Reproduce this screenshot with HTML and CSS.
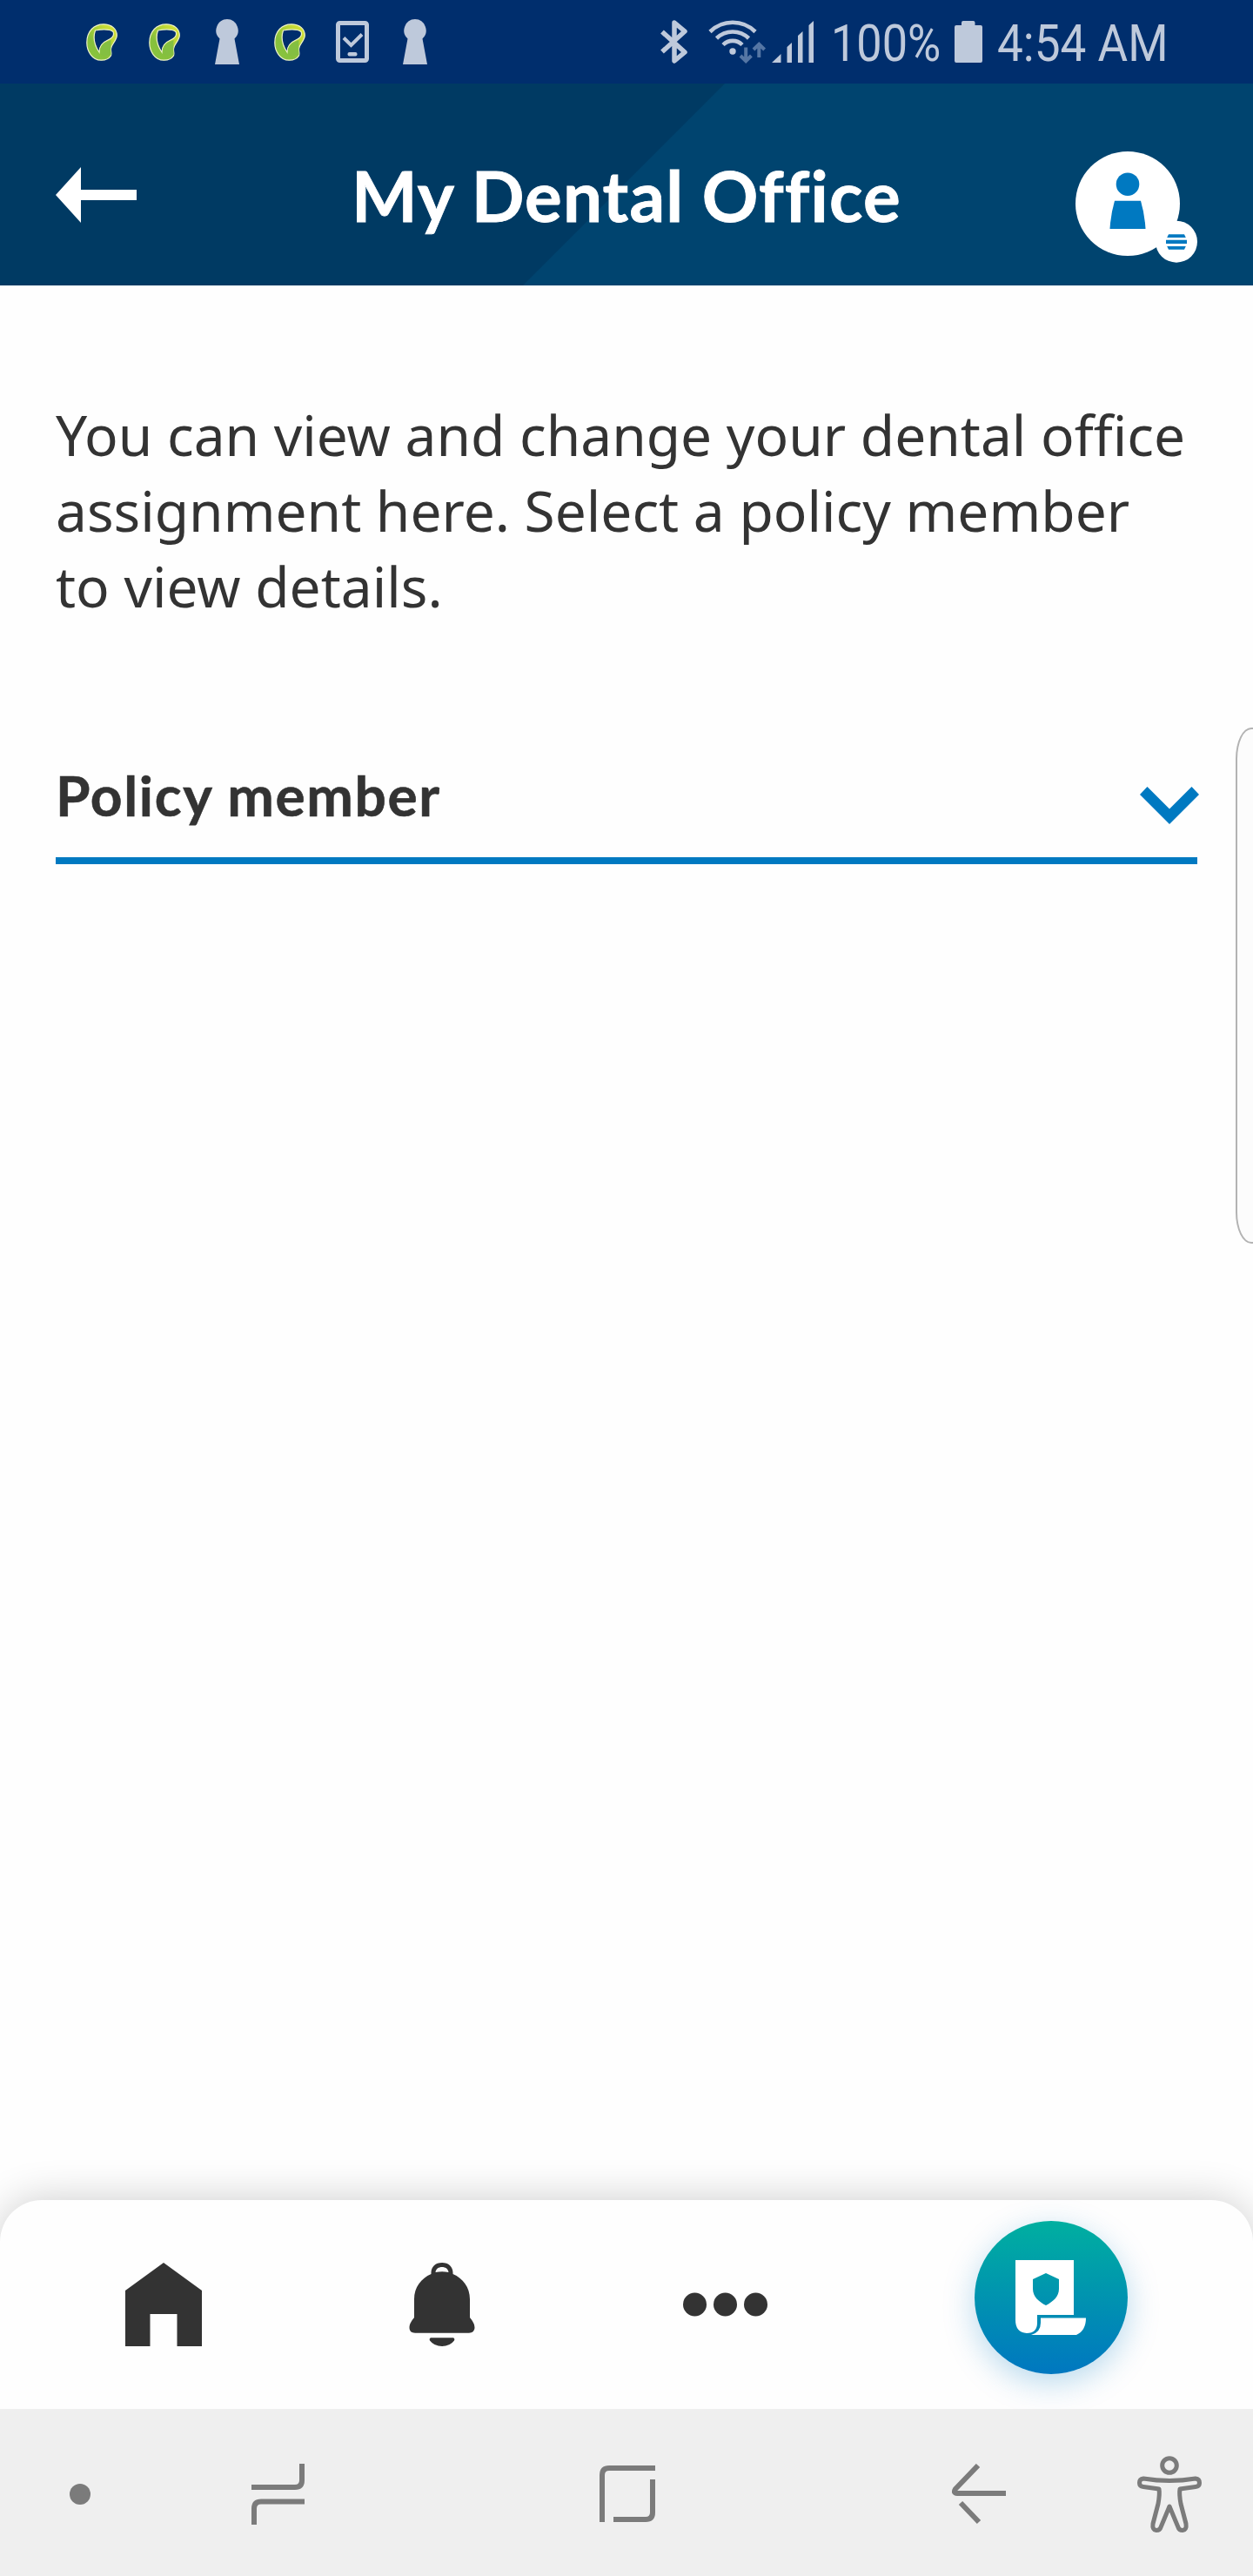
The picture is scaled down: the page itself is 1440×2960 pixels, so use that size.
FILE: index.html
```html
<!DOCTYPE html>
<html lang="en">
<head>
<meta charset="utf-8">
<title>My Dental Office</title>
<link rel="stylesheet" href="styles.css">
</head>
<body>
<svg width="0" height="0" class="defs" aria-hidden="true">
  <defs>
    <linearGradient id="leaf" x1="0" y1="1" x2="1" y2="0"><stop offset="0" stop-color="#8cc63f"/><stop offset=".35" stop-color="#86c03c"/><stop offset=".75" stop-color="#c4d937"/><stop offset="1" stop-color="#dfe63a"/></linearGradient>
    <symbol id="loop" viewBox="0 0 36 43">
      <path fill="url(#leaf)" stroke="#eef3c8" stroke-width="1.2" fill-rule="evenodd" d="M20 .8C29 .8 35.3 6 35.3 13.500C35.300 20 29 23 28.500 29C28.300 33 29.500 34 28.500 37C26 41 21 42.300 17 42.200C7 42 .8 32 .8 22C.8 9 9 .8 20 .8ZM10.500 8C8 15 9 24 15 33C15 26 18 22 25 19C30.500 16.500 32.500 13 31 9.500C27 6.500 19 6.500 10.500 8Z"/>
      <path fill="#84bf41" d="M16 34C16 26 19 23 25 20.500L28.500 19C28 24 28.500 30 28.500 36C24 38 19 38 16 34Z"/>
    </symbol>
    <symbol id="keyhole" viewBox="0 0 28 52"><path d="M14 0a13 13 0 0 1 8.500 22.500L28 52H0L5.500 22.500A13 13 0 0 1 14 0Z"/></symbol>
  </defs>
</svg>
<div class="screen">
  <div class="status">
    <div class="notices">
      <svg class="loop" viewBox="0 0 36 43"><use href="#loop"/></svg>
      <svg class="loop" viewBox="0 0 36 43"><use href="#loop"/></svg>
      <svg class="keyhole" viewBox="0 0 28 52"><use href="#keyhole"/></svg>
      <svg class="loop" viewBox="0 0 36 43"><use href="#loop"/></svg>
      <svg class="tablet" viewBox="0 0 38 48"><rect x="2.500" y="2.500" width="33" height="43" rx="2" fill="none" stroke="currentColor" stroke-width="5"/><path d="M9 19.500L17.500 28L30 15.500" fill="none" stroke="currentColor" stroke-width="4"/><rect x="13.500" y="36" width="11" height="4.500" rx="2"/></svg>
      <svg class="keyhole" viewBox="0 0 28 52"><use href="#keyhole"/></svg>
    </div>
    <div class="system">
      <svg class="bt" viewBox="0 0 32 50"><path d="M2 13.500L28 37L16 47V3L28 13L2 36.500" fill="none" stroke="currentColor" stroke-width="5.500" stroke-linejoin="round"/></svg>
      <svg class="wifi" viewBox="0 0 66 50"><g fill="none" stroke="currentColor" stroke-width="4.600"><path d="M2 13.500a37 37 0 0 1 52 0M9.500 21a26.500 26.500 0 0 1 37 0M17 28.500a15.500 15.500 0 0 1 22 0"/></g><circle cx="28" cy="36" r="3.700"/><g fill="none" stroke="#5576a4" stroke-width="4"><path d="M43.200 31.500v14M37 41l6.200 6.200L49.400 41M58.300 43V29M52 34l6.300-6.200L64.600 34"/></g></svg>
      <svg class="signal" viewBox="0 0 48 48"><path d="M0 48L10.500 38V48ZM17.500 30L23 25V48H17.500ZM30 17L35.500 12V48H30ZM42.500 5L48 0V48H42.500Z"/></svg>
      <span class="percent"><span class="narrow">100%</span></span>
      <svg class="battery" viewBox="0 0 32 48"><path d="M10 0H21.500Q23.500 0 23.500 2V5H30Q32 5 32 7V46Q32 48 30 48H2Q0 48 0 46V7Q0 5 2 5H8V2Q8 0 10 0Z"/></svg>
      <span class="clock"><span class="narrow">4:54 AM</span></span>
    </div>
  </div>

  <header class="header">
    <svg class="back" viewBox="0 0 93 64"><path d="M0 32L29 0V26H93V38H29V64Z"/></svg>
    <h1>My Dental Office</h1>
    <svg class="profile" viewBox="0 0 140 128"><g fill="#fff"><circle cx="60" cy="60" r="60"/><circle cx="116" cy="103.700" r="24"/></g><g fill="#0079c1"><circle cx="60" cy="37.700" r="13.300"/><path d="M45 56.700H75Q79.500 72 80.500 89H39.500Q40.500 72 45 56.700Z"/><path d="M107 95.300H125L126.800 99H105.200ZM104 101.800H128V106H104ZM105.200 109H126.800L125 112.700H107Z"/></g></svg>
  </header>

  <main class="content">
    <p>You can view and change your dental office assignment here. Select a policy member to view details.</p>
    <div class="select">
      <span>Policy member</span>
      <svg viewBox="0 0 68 43"><path d="M8.500 0L34 25.500L59.500 0L68 9L34 43L0 9Z"/></svg>
    </div>
    <div class="edge-handle"></div>
  </main>

  <nav class="tabs">
    <svg class="home" viewBox="0 0 88 96"><path d="M44 0L88 32V96H59.500V59H28.500V96H0V32Z"/></svg>
    <svg class="bell" viewBox="0 0 76 96"><path fill-rule="evenodd" d="M25.500 13C25 5 30 0 38 0S51 5 50.500 13C62 18 70 28 70 42V63C73 67 75.500 70 75.500 75Q75 80.700 69 80.700H7Q.5 80.700.5 75C.5 70 3 67 6 63V42C6 28 14 18 25.500 13ZM30.500 11Q38 9.600 45.500 11C45 7 42 5 38 5S31 7 30.500 11ZM25 86.300H51Q53 87 52 89.500Q47 96 38 96T24 89.500Q23 87 25 86.300Z"/></svg>
    <svg class="more" viewBox="0 0 97 28"><circle cx="13.500" cy="14" r="13.500"/><circle cx="48.500" cy="14" r="13.500"/><circle cx="83.500" cy="14" r="13.500"/></svg>
    <div class="fab"><svg viewBox="0 0 81 86"><path fill-rule="evenodd" d="M0 0H67V63H25V72Q25 84 13 84Q0 83 0 69ZM35 15L20 22V33C20 42 27 48 35 52C43 48 50 42 50 33V22Z"/><path d="M29 66.500H81Q81 81 70 86H18Q29 83 29 72Z"/></svg></div>
  </nav>

  <div class="sysnav">
    <svg class="dot" viewBox="0 0 24 24"><circle cx="12" cy="12" r="12"/></svg>
    <svg class="recents" viewBox="0 0 62 70"><path d="M0 27H50Q58 27 58 19V0M61 43.500H11Q3 43.500 3 51.500V70"/></svg>
    <svg class="window" viewBox="0 0 64 65"><path d="M3 65V11Q3 3 11 3H64M61 16V54Q61 62 53 62H16"/></svg>
    <svg class="prev" viewBox="0 0 62 70"><path d="M30 2L4 29Q1 34 6 34H62M10 45L31 67"/></svg>
    <svg class="a11y" viewBox="0 0 74 88"><circle cx="37" cy="11" r="8.300"/><path d="M7 26Q37 31 67 26Q71.500 26.500 71.500 31Q71.500 35 67 35.500L49 38Q48 44 50 55L56 78Q57 85 52 85.500Q48 85.500 47 82L37 58L27 82Q26 85.500 22 85.500Q17 85 18 78L24 55Q26 44 25 38L7 35.500Q2.500 35 2.500 31Q2.500 26.500 7 26Z"/></svg>
  </div>
</div>
</body>
</html>
```
FILE: styles.css
```css
* { box-sizing: border-box; }
body { margin: 0; background: #fefefe; }
svg { display: block; flex: none; fill: currentColor; }
.defs { position: absolute; }

.screen {
  display: flex;
  flex-direction: column;
  width: 1440px;
  height: 2960px;
  overflow: hidden;
  background: #fefefe;
}

.status {
  display: flex;
  flex: none;
  justify-content: space-between;
  height: 96px;
  padding: 0 100px 0 99px;
  background: #002e6d;
  color: #bec9db;
}
.notices, .system { display: flex; align-items: center; }
.notices .loop { width: 36px; height: 43px; margin-right: 36px; margin-top: 1px; }
.notices .keyhole { width: 28px; height: 52px; margin: 0 40px 0 4px; }
.notices .tablet { width: 38px; height: 48px; margin: 0 39px 0 -1px; }
.notices .keyhole:last-child { margin: 0; }

.bt { width: 32px; height: 50px; }
.wifi { width: 66px; height: 50px; margin-left: 23px; }
.signal { width: 48px; height: 48px; margin-left: 7px; }
.battery { width: 32px; height: 48px; }
.percent, .clock { font: 60px/70px Roboto, sans-serif; white-space: nowrap; }
.percent { width: 126px; margin: 4px 16px 0 20px; }
.clock { width: 194px; margin: 4px 0 0 17px; }
.narrow { display: inline-block; transform: scaleX(.87); transform-origin: 0 50%; }
.clock .narrow { transform: scaleX(.885); }

.header {
  display: flex;
  flex: none;
  height: 232px;
  padding: 78px 64px 0;
  background: linear-gradient(-45deg, #00446f 0 593px, #003a63 593.500px);
  color: #fff;
}
.back { width: 93px; height: 64px; margin-top: 18px; }
h1 {
  margin: 0 0 0 247px;
  font: bold 80px/100px Lato, sans-serif;
  letter-spacing: 1.1px;
  -webkit-text-stroke: .8px currentColor;
  white-space: nowrap;
}
.profile { width: 140px; height: 128px; margin-left: auto; }

.content {
  position: relative;
  flex: 1;
  padding: 128px 64px 0;
  color: #333;
}
.content p { width: 1312px; margin: 0; font: 64px/87px "Noto Sans", sans-serif; }
.select {
  display: flex;
  justify-content: space-between;
  height: 112px;
  margin-top: 164px;
  border-bottom: 8px solid #0079c1;
  font: bold 64px/66px Lato, sans-serif;
  letter-spacing: 1.65px;
}
.select span { -webkit-text-stroke: .6px currentColor; }
.select svg { width: 68px; height: 43px; margin: 23px -2px 0 0; color: #0079c1; }
.edge-handle {
  position: absolute;
  top: 508px;
  right: -2px;
  width: 22px;
  height: 593px;
  border: 2px solid #b3b3b3;
  border-radius: 18px 0 0 18px / 36px 0 0 36px;
  background: #fcfcfc;
}

.tabs {
  display: flex;
  flex: none;
  height: 240px;
  padding: 0 144px;
  border-radius: 48px 48px 0 0;
  background: #fefefe;
  box-shadow: 0 0 48px rgba(0, 0, 0, .2);
  color: #333;
}
.home { width: 88px; height: 96px; margin-top: 72px; }
.bell { width: 76px; height: 96px; margin: 72px 0 0 238px; }
.more { width: 97px; height: 28px; margin: 106px 0 0 239px; }
.fab {
  display: flex;
  width: 176px;
  height: 176px;
  margin: 24px 0 0 238px;
  padding: 45px 0 0 47px;
  border-radius: 50%;
  background: linear-gradient(#00afa0, #0077c0);
  box-shadow: 0 10px 36px rgba(0, 121, 193, .28);
  color: #fff;
}
.fab svg { width: 81px; height: 86px; }

.sysnav {
  position: relative;
  display: flex;
  flex: none;
  align-items: center;
  height: 192px;
  padding: 3px 60px 0 80px;
  background: #efefef;
  color: #7b7b7b;
}
.sysnav path, .a11y circle { fill: none; stroke: currentColor; stroke-width: 6; }
.dot { width: 24px; height: 24px; }
.recents { width: 62px; height: 70px; margin-left: 185px; }
.window { width: 64px; height: 65px; margin-left: 338px; }
.prev { width: 62px; height: 70px; margin-left: 341px; }
.a11y { width: 74px; height: 88px; margin-left: 151px; }
.sysnav .a11y path, .sysnav .a11y circle { stroke-width: 5; stroke-linejoin: round; }
```
